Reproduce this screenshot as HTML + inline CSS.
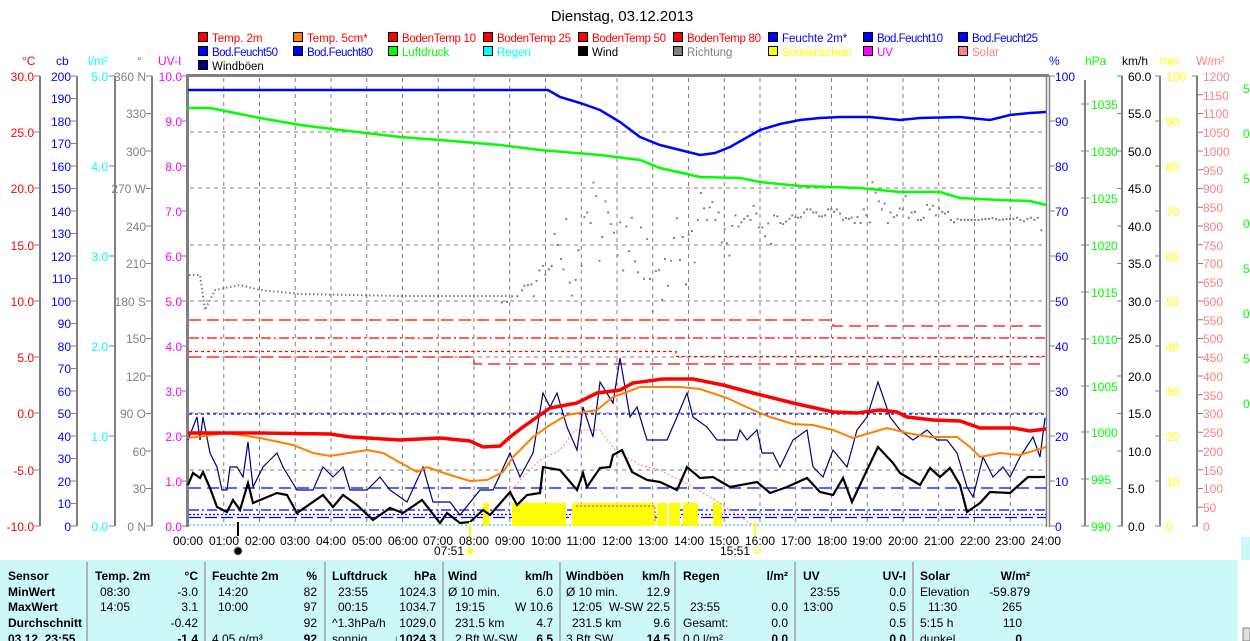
<!DOCTYPE html>
<html><head><meta charset="utf-8"><style>
html,body{margin:0;padding:0;background:#fff;}
svg{display:block;font-family:"Liberation Sans",Arial,sans-serif;}
</style></head><body>
<svg width="1250" height="641" viewBox="0 0 1250 641" xmlns="http://www.w3.org/2000/svg">
<rect width="1250" height="641" fill="#fff"/>
<text x="622" y="21" font-size="15" text-anchor="middle" fill="#000">Dienstag, 03.12.2013</text>

<!-- legend -->
<g font-size="12" stroke="#000" stroke-width="1">
<rect x="198.5" y="32.5" width="9" height="9" fill="#ff0000"/><rect x="293.5" y="32.5" width="9" height="9" fill="#ff8000"/><rect x="388.5" y="32.5" width="9" height="9" fill="#ff0000"/><rect x="483.5" y="32.5" width="9" height="9" fill="#ff0000"/><rect x="578.5" y="32.5" width="9" height="9" fill="#ff0000"/><rect x="673.5" y="32.5" width="9" height="9" fill="#ff0000"/><rect x="768.5" y="32.5" width="9" height="9" fill="#0000ff"/><rect x="863.5" y="32.5" width="9" height="9" fill="#0000ff"/><rect x="958.5" y="32.5" width="9" height="9" fill="#0000ff"/>
<rect x="198.5" y="46.5" width="9" height="9" fill="#0000ff"/><rect x="293.5" y="46.5" width="9" height="9" fill="#0000ff"/><rect x="388.5" y="46.5" width="9" height="9" fill="#00ff00"/><rect x="483.5" y="46.5" width="9" height="9" fill="#00ffff"/><rect x="578.5" y="46.5" width="9" height="9" fill="#000"/><rect x="673.5" y="46.5" width="9" height="9" fill="#808080"/><rect x="768.5" y="46.5" width="9" height="9" fill="#ffff00"/><rect x="863.5" y="46.5" width="9" height="9" fill="#ff00ff"/><rect x="958.5" y="46.5" width="9" height="9" fill="#ff8080"/>
<rect x="198.5" y="60.5" width="9" height="9" fill="#000080"/>
</g>
<g font-size="11.5">
<text x="212" y="42" fill="#ff0000">Temp. 2m</text><text x="307" y="42" fill="#ff0000">Temp. 5cm*</text><text x="402" y="42" fill="#ff0000" textLength="74">BodenTemp 10</text><text x="497" y="42" fill="#ff0000" textLength="74">BodenTemp 25</text><text x="592" y="42" fill="#ff0000" textLength="74">BodenTemp 50</text><text x="687" y="42" fill="#ff0000" textLength="74">BodenTemp 80</text><text x="782" y="42" fill="#0000ff">Feuchte 2m*</text><text x="877" y="42" fill="#0000ff" textLength="66">Bod.Feucht10</text><text x="972" y="42" fill="#0000ff" textLength="66">Bod.Feucht25</text>
<text x="212" y="56" fill="#0000ff" textLength="66">Bod.Feucht50</text><text x="307" y="56" fill="#0000ff" textLength="66">Bod.Feucht80</text><text x="402" y="56" fill="#00ff00">Luftdruck</text><text x="497" y="56" fill="#00ffff">Regen</text><text x="592" y="56" fill="#000">Wind</text><text x="687" y="56" fill="#808080">Richtung</text><text x="782" y="56" fill="#ffff00" textLength="70">Sonnenschein</text><text x="877" y="56" fill="#ff00ff">UV</text><text x="972" y="56" fill="#ff8080">Solar</text>
<text x="212" y="70" fill="#000">Windböen</text>
</g>

<!-- axis headers -->
<g font-size="12">
<text x="22" y="65" fill="#ff0000">°C</text><text x="56" y="65" fill="#0000ff">cb</text><text x="88" y="65" fill="#00ffff">l/m²</text><text x="137" y="65" fill="#808080">°</text><text x="158" y="65" fill="#ff00ff">UV-I</text>
<text x="1049" y="65" fill="#0000ff">%</text><text x="1085" y="65" fill="#00ff00">hPa</text><text x="1122" y="65" fill="#000">km/h</text><text x="1160" y="65" fill="#ffff00">min</text><text x="1196" y="65" fill="#ff8080">W/m²</text>
</g>

<!-- axis lines -->
<g stroke="#808080" stroke-width="2" fill="none">
<path d="M40 76V526M77 76V526M115 76V526M152 76V526M1085 80V526M1122 76V526M1160 76V526M1197 76V526"/>
</g>
<g stroke="#808080" stroke-width="1" fill="none">
<path d="M34 76h6M34 132h6M34 188h6M34 245h6M34 301h6M34 357h6M34 413h6M34 470h6M34 526h6"/>
<path d="M71 76h6M71 98.5h6M71 121h6M71 143.5h6M71 166h6M71 188.5h6M71 211h6M71 233.5h6M71 256h6M71 278.5h6M71 301h6M71 323.5h6M71 346h6M71 368.5h6M71 391h6M71 413.5h6M71 436h6M71 458.5h6M71 481h6M71 503.5h6M71 526h6"/>
<path d="M109 76h6M109 166h6M109 256h6M109 346h6M109 436h6M109 526h6"/>
<path d="M146 76h6M146 113.5h6M146 151h6M146 188.5h6M146 226h6M146 263.5h6M146 301h6M146 338.5h6M146 376h6M146 413.5h6M146 451h6M146 488.5h6M146 526h6"/>
<path d="M182 76h6M182 121h6M182 166h6M182 211h6M182 256h6M182 301h6M182 346h6M182 391h6M182 436h6M182 481h6M182 526h6"/>
<path d="M1049 76h6M1049 121h6M1049 166h6M1049 211h6M1049 256h6M1049 301h6M1049 346h6M1049 391h6M1049 436h6M1049 481h6M1049 526h6"/>
<path d="M1081 104h8M1081 151h8M1081 198h8M1081 245h8M1081 292h8M1081 339h8M1081 386h8M1081 432h8M1081 479h8M1081 526h8"/>
<path d="M1117 76h6M1117 113.5h6M1117 151h6M1117 188.5h6M1117 226h6M1117 263.5h6M1117 301h6M1117 338.5h6M1117 376h6M1117 413.5h6M1117 451h6M1117 488.5h6M1117 526h6"/>
<path d="M1155 76h6M1155 121h6M1155 166h6M1155 211h6M1155 256h6M1155 301h6M1155 346h6M1155 391h6M1155 436h6M1155 481h6M1155 526h6"/>
<path d="M1192 76h6M1197 94.75h6M1197 113.5h6M1197 132.25h6M1197 151h6M1197 169.75h6M1197 188.5h6M1197 207.25h6M1197 226h6M1197 244.75h6M1197 263.5h6M1197 282.25h6M1197 301h6M1197 319.75h6M1197 338.5h6M1197 357.25h6M1197 376h6M1197 394.75h6M1197 413.5h6M1197 432.25h6M1197 451h6M1197 469.75h6M1197 488.5h6M1197 507.25h6M1192 526h6"/>
</g>

<!-- left labels -->
<g font-size="12" text-anchor="end">
<g fill="#ff0000"><text x="34" y="81">30.0</text><text x="34" y="137">25.0</text><text x="34" y="193">20.0</text><text x="34" y="250">15.0</text><text x="34" y="306">10.0</text><text x="34" y="362">5.0</text><text x="34" y="418">0.0</text><text x="34" y="475">-5.0</text><text x="34" y="531">-10.0</text></g>
<g fill="#0000ff"><text x="71" y="81">200</text><text x="71" y="103">190</text><text x="71" y="126">180</text><text x="71" y="148">170</text><text x="71" y="171">160</text><text x="71" y="193">150</text><text x="71" y="216">140</text><text x="71" y="238">130</text><text x="71" y="261">120</text><text x="71" y="283">110</text><text x="71" y="306">100</text><text x="71" y="328">90</text><text x="71" y="351">80</text><text x="71" y="373">70</text><text x="71" y="396">60</text><text x="71" y="418">50</text><text x="71" y="441">40</text><text x="71" y="463">30</text><text x="71" y="486">20</text><text x="71" y="508">10</text><text x="71" y="531">0</text></g>
<g fill="#00ffff"><text x="108" y="81">5.0</text><text x="108" y="171">4.0</text><text x="108" y="261">3.0</text><text x="108" y="351">2.0</text><text x="108" y="441">1.0</text><text x="108" y="531">0.0</text></g>
<g fill="#808080"><text x="146" y="81">360 N</text><text x="146" y="118">330</text><text x="146" y="156">300</text><text x="146" y="193">270 W</text><text x="146" y="231">240</text><text x="146" y="268">210</text><text x="146" y="306">180 S</text><text x="146" y="343">150</text><text x="146" y="381">120</text><text x="146" y="418">90  O</text><text x="146" y="456">60</text><text x="146" y="493">30</text><text x="146" y="531">0    N</text></g>
<g fill="#ff00ff"><text x="182" y="81">10.0</text><text x="182" y="126">9.0</text><text x="182" y="171">8.0</text><text x="182" y="216">7.0</text><text x="182" y="261">6.0</text><text x="182" y="306">5.0</text><text x="182" y="351">4.0</text><text x="182" y="396">3.0</text><text x="182" y="441">2.0</text><text x="182" y="486">1.0</text><text x="182" y="531">0.0</text></g>
</g>
<!-- right labels -->
<g font-size="12">
<g fill="#0000ff"><text x="1055" y="81">100</text><text x="1055" y="126">90</text><text x="1055" y="171">80</text><text x="1055" y="216">70</text><text x="1055" y="261">60</text><text x="1055" y="306">50</text><text x="1055" y="351">40</text><text x="1055" y="396">30</text><text x="1055" y="441">20</text><text x="1055" y="486">10</text><text x="1055" y="531">0</text></g>
<g fill="#00ff00"><text x="1091" y="109">1035</text><text x="1091" y="156">1030</text><text x="1091" y="203">1025</text><text x="1091" y="250">1020</text><text x="1091" y="297">1015</text><text x="1091" y="344">1010</text><text x="1091" y="391">1005</text><text x="1091" y="437">1000</text><text x="1091" y="484">995</text><text x="1091" y="531">990</text></g>
<g fill="#000"><text x="1128" y="81">60.0</text><text x="1128" y="118">55.0</text><text x="1128" y="156">50.0</text><text x="1128" y="193">45.0</text><text x="1128" y="231">40.0</text><text x="1128" y="268">35.0</text><text x="1128" y="306">30.0</text><text x="1128" y="343">25.0</text><text x="1128" y="381">20.0</text><text x="1128" y="418">15.0</text><text x="1128" y="456">10.0</text><text x="1128" y="493">5.0</text><text x="1128" y="531">0.0</text></g>
<g fill="#ffff00"><text x="1166" y="81">100</text><text x="1166" y="126">90</text><text x="1166" y="171">80</text><text x="1166" y="216">70</text><text x="1166" y="261">60</text><text x="1166" y="306">50</text><text x="1166" y="351">40</text><text x="1166" y="396">30</text><text x="1166" y="441">20</text><text x="1166" y="486">10</text><text x="1166" y="531">0</text></g>
<g fill="#ff8080"><text x="1203" y="81">1200</text><text x="1203" y="100">1150</text><text x="1203" y="118">1100</text><text x="1203" y="137">1050</text><text x="1203" y="156">1000</text><text x="1203" y="175">950</text><text x="1203" y="193">900</text><text x="1203" y="212">850</text><text x="1203" y="231">800</text><text x="1203" y="250">750</text><text x="1203" y="268">700</text><text x="1203" y="287">650</text><text x="1203" y="306">600</text><text x="1203" y="325">550</text><text x="1203" y="343">500</text><text x="1203" y="362">450</text><text x="1203" y="381">400</text><text x="1203" y="400">350</text><text x="1203" y="418">300</text><text x="1203" y="437">250</text><text x="1203" y="456">200</text><text x="1203" y="475">150</text><text x="1203" y="493">100</text><text x="1203" y="512">50</text><text x="1203" y="531">0</text></g>
<g fill="#00ff00"><text x="1243" y="93">5</text><text x="1243" y="138">0</text><text x="1243" y="183">5</text><text x="1243" y="228">0</text><text x="1243" y="273">5</text><text x="1243" y="318">0</text><text x="1243" y="363">5</text><text x="1243" y="408">0</text></g>
</g>

<!-- grid -->
<g stroke="#808080" stroke-width="1" stroke-dasharray="4,4" fill="none">
<path d="M223.75 78V526M259.5 78V526M295.25 78V526M331 78V526M366.75 78V526M402.5 78V526M438.25 78V526M474 78V526M509.75 78V526M545.5 78V526M581.25 78V526M617 78V526M652.75 78V526M688.5 78V526M724.25 78V526M760 78V526M795.75 78V526M831.5 78V526M867.25 78V526M903 78V526M938.75 78V526M974.5 78V526M1010.25 78V526"/>
<path d="M190 132H1046M190 188H1046M190 245H1046M190 301H1046M190 357H1046M190 413H1046M190 470H1046"/>
</g>
<!-- plot frame -->
<path d="M187.5 76V527M186 75.5H1049" stroke="#808080" stroke-width="3" fill="none"/>
<path d="M1046.5 76V527M1049.5 76V527" stroke="#808080" stroke-width="1.5" fill="none"/>

<!-- soil temp lines -->
<g fill="none" stroke="#ff0000" stroke-width="1.3">
<path d="M189 320H833V326H1046" stroke-dasharray="12,6"/>
<path d="M189 338H1046" stroke-dasharray="10,3,2,3"/>
<path d="M189 351.5H676V356.5H1046" stroke-dasharray="3,3"/>
<path d="M189 357H474V364H1046" stroke-dasharray="12,6"/>
</g>
<!-- soil moisture lines -->
<g fill="none" stroke="#0000ff" stroke-width="1.3">
<path d="M189 414H1046" stroke-dasharray="3,3"/>
<path d="M189 488H1046" stroke-dasharray="12,6"/>
<path d="M189 510H1046" stroke-dasharray="10,3,2,3"/>
<path d="M189 514.5H1046" stroke-dasharray="2,2"/>
<path d="M189 517.5H1046" stroke-dasharray="12,4"/>
</g>
<path d="M189 525H1046" stroke="#00c0c0" stroke-width="1" stroke-dasharray="2,2"/>

<!-- sunshine -->
<g fill="#ffff00">
<rect x="483" y="503" width="6" height="23"/><rect x="512" y="503" width="54" height="23"/><rect x="572" y="503" width="83" height="23"/><rect x="657" y="503" width="10" height="23"/><rect x="669" y="503" width="11" height="23"/><rect x="683" y="503" width="15" height="23"/><rect x="713" y="503" width="9" height="23"/>
</g>
<path d="M576 506H655V522" stroke="#ff00ff" stroke-width="1" stroke-dasharray="2,2" fill="none"/>

<!-- solar pink dotted -->
<path d="M500 505L520 480L540 460L560 450L575 430L600 430L615 450L640 465L660 470L690 485L715 500L745 520L755 526" stroke="#ff8080" stroke-width="1" stroke-dasharray="2,2" fill="none"/>

<!-- Luftdruck -->
<polyline fill="none" stroke="#00ff00" stroke-width="2.5" points="188,108 210,108 230,112 260,118 300,125 340,130 400,137 440,140 500,145 540,150 600,155 640,160 660,168 700,177 740,178 760,182 800,186 860,188 900,192 940,192 960,198 1000,200 1030,201 1046,205"/>
<!-- Feuchte 2m -->
<polyline fill="none" stroke="#0000ff" stroke-width="2.5" points="188,90 548,90 560,97 580,103 600,110 620,122 640,137 660,145 680,150 700,155 715,153 730,147 760,130 780,124 800,120 820,118 840,117 870,117 900,120 920,118 960,117 990,120 1010,115 1030,113 1046,112"/>
<!-- Richtung early -->
<path d="M189 275H200L205 310L215 290L240 285L260 290L280 292L300 294L400 296L510 296" stroke="#808080" stroke-width="2" stroke-dasharray="1.5,2.5" fill="none"/>
<g transform="translate(500,170) scale(0.3488)" fill="none" stroke="#808080" stroke-width="5.7" stroke-linecap="square">
<path d="M5 380h0M20 378h0M35 362h0M50 362h0M63 345h0M70 332h0M80 330h0M90 328h0M97 362h0M105 318h0M113 288h0M123 275h0M130 300h0M140 285h0M148 275h0M157 183h0M165 215h0M175 255h0M182 285h0M190 140h0M200 323h0M207 360h0M217 315h0M225 230h0M234 275h0M242 135h0M250 122h0M260 152h0M268 36h0M276 75h0M285 260h0M293 192h0M302 90h0M310 122h0M318 155h0M327 180h0M337 245h0M345 150h0M353 288h0M362 162h0M370 233h0M378 137h0M387 262h0M396 293h0M404 165h0M413 312h0M422 198h0M430 312h0M438 405h0M447 290h0M456 287h0M465 372h0M473 255h0M482 332h0M490 260h0M499 195h0M507 138h0M516 258h0M524 192h0M533 328h0M541 185h0M550 175h0M558 265h0M567 143h0M576 66h0M585 110h0M593 143h0M601 107h0M609 92h0M618 143h0M627 122h0M636 208h0M644 170h0M650 210h0M658 245h0M666 160h0M675 130h0M684 162h0M692 150h0M700 140h0M710 132h0M718 143h0M727 103h0M735 125h0M743 165h0M752 165h0M760 190h0M769 153h0M777 212h0M786 130h0M795 133h0M804 152h0M812 155h0M820 148h0M830 140h0M838 130h0M847 135h0M855 137h0M863 135h0M872 122h0M880 113h0M890 113h0M898 122h0M907 122h0M915 133h0M923 133h0M932 130h0M941 113h0M950 113h0M958 120h0M966 113h0M975 125h0M983 143h0M992 138h0M1000 140h0M1008 137h0M1017 152h0M1025 135h0M1034 152h0M1043 113h0M1050 130h0M1060 150h0M1068 35h0M1077 65h0M1086 90h0M1095 113h0M1103 96h0M1112 152h0M1120 122h0M1129 135h0M1138 130h0M1146 110h0M1155 113h0M1163 75h0M1172 137h0M1180 122h0M1190 120h0M1198 143h0M1207 143h0M1215 137h0M1224 100h0M1232 113h0M1241 103h0M1250 130h0M1259 110h0M1268 120h0M1276 125h0M1285 120h0M1293 143h0M1302 150h0M1312 140h0M1322 143h0M1332 143h0M1342 143h0M1352 143h0M1362 143h0M1372 143h0M1382 142h0M1392 141h0M1402 140h0M1412 138h0M1422 141h0M1432 143h0M1442 142h0M1452 141h0M1462 141h0M1472 140h0M1482 137h0M1492 143h0M1502 147h0M1512 140h0M1522 137h0M1532 143h0M1542 137h0M1552 173h0"/>
</g>

<!-- Windböen -->
<polyline fill="none" stroke="#000080" stroke-width="1.2" points="188,440 197,417 200,440 203,417 210,453 217,467 222,490 227,490 230,467 237,467 243,477 248,442 253,487 263,467 277,453 283,467 297,490 313,490 323,467 333,477 343,467 350,490 367,490 380,477 390,490 407,502 423,467 433,502 450,502 460,515 480,490 493,490 510,453 520,477 533,453 543,393 550,407 557,393 567,427 577,450 583,407 593,437 600,382 613,403 620,358 630,417 637,407 647,440 657,440 667,440 677,417 687,393 693,417 707,427 717,440 737,440 740,430 747,440 757,430 762,453 773,453 780,467 793,440 807,430 813,467 823,477 833,450 847,467 857,430 867,417 878,382 890,417 900,430 913,440 927,430 937,440 947,440 957,453 967,487 973,497 983,457 993,477 1003,467 1010,477 1020,457 1033,437 1040,457 1045,418"/>
<!-- Temp 5cm -->
<polyline fill="none" stroke="#ff8000" stroke-width="2" points="188,438 227,433 260,438 293,445 313,453 330,456 367,450 383,453 417,472 427,467 450,475 470,481 487,480 503,472 513,457 533,437 550,425 567,415 597,410 613,397 627,392 640,387 680,387 700,389 727,398 753,410 770,417 793,424 813,425 833,430 853,438 870,433 887,428 907,433 930,437 957,437 970,447 980,457 1000,453 1020,455 1046,447"/>
<!-- Temp 2m -->
<polyline fill="none" stroke="#ff0000" stroke-width="3.5" points="188,433 260,433 330,434 350,437 400,440 440,438 470,441 483,447 500,446 510,437 523,427 550,408 577,403 597,393 620,390 633,383 663,379 693,379 723,385 753,393 793,403 833,412 857,413 880,410 897,412 907,417 933,420 960,421 980,428 1013,428 1030,431 1046,429"/>
<!-- Wind -->
<polyline fill="none" stroke="#000" stroke-width="2.2" points="188,485 193,473 200,478 203,472 210,488 217,507 227,512 233,500 240,510 248,483 253,503 277,493 287,495 297,513 323,495 333,507 343,495 357,505 373,520 390,508 403,513 422,500 440,523 447,513 460,523 470,522 483,510 490,515 510,492 517,505 527,495 540,493 543,467 560,470 577,490 583,473 587,487 600,468 610,467 613,455 622,450 632,472 647,480 660,482 677,490 687,467 700,478 713,477 730,487 757,482 770,493 787,487 807,478 820,492 833,495 843,478 852,502 867,470 878,447 893,463 900,473 920,485 930,468 940,477 950,468 960,485 967,512 980,503 990,492 1010,493 1028,477 1045,477"/>

<!-- time labels -->
<g font-size="12" text-anchor="middle" fill="#000">
<text x="188" y="545">00:00</text><text x="224" y="545">01:00</text><text x="260" y="545">02:00</text><text x="295" y="545">03:00</text><text x="331" y="545">04:00</text><text x="367" y="545">05:00</text><text x="403" y="545">06:00</text><text x="438" y="545">07:00</text><text x="474" y="545">08:00</text><text x="510" y="545">09:00</text><text x="546" y="545">10:00</text><text x="581" y="545">11:00</text><text x="617" y="545">12:00</text><text x="653" y="545">13:00</text><text x="689" y="545">14:00</text><text x="724" y="545">15:00</text><text x="760" y="545">16:00</text><text x="796" y="545">17:00</text><text x="832" y="545">18:00</text><text x="867" y="545">19:00</text><text x="903" y="545">20:00</text><text x="939" y="545">21:00</text><text x="975" y="545">22:00</text><text x="1010" y="545">23:00</text><text x="1046" y="545">24:00</text>
<text x="449" y="555">07:51</text><text x="735" y="555">15:51</text>
</g>
<path d="M238 522V536" stroke="#000" stroke-width="2"/>
<circle cx="238" cy="551" r="4" fill="#000" stroke="#999" stroke-width="1"/>
<path d="M470 522V536M755 522V536" stroke="#ffff00" stroke-width="2"/>
<circle cx="470" cy="551" r="3" fill="#ffff00"/>
<rect x="755" y="548" width="5" height="5" fill="none" stroke="#ffff00" stroke-width="1"/>

<!-- scrollbar bit -->
<rect x="1241" y="537" width="9" height="24" fill="#ccf8f8"/>

<!-- table -->
<rect x="0" y="560" width="1238" height="81" fill="#ccf8f8"/>
<rect x="1240" y="560" width="10" height="81" fill="#fff"/>
<rect x="1243" y="628" width="7" height="13" fill="#e0e0e0" stroke="#808080" stroke-width="1"/>
<g stroke="#a0a0a0" stroke-width="1.5">
<path d="M87 562V641M205 562V641M325 562V641M443 562V641M560 562V641M675 562V641M795 562V641M913 562V641"/>
</g>
<g font-size="12" fill="#000">
<g font-weight="bold"><text x="8" y="580">Sensor</text><text x="8" y="611">MaxWert</text><text x="8" y="596">MinWert</text><text x="8" y="627">Durchschnitt</text><text x="8" y="643">03.12. 23:55</text>
<text x="95" y="580">Temp. 2m</text><text x="212" y="580">Feuchte 2m</text><text x="332" y="580">Luftdruck</text><text x="448" y="580">Wind</text><text x="566" y="580">Windböen</text><text x="683" y="580">Regen</text><text x="803" y="580">UV</text><text x="920" y="580">Solar</text></g>
<g font-weight="bold" text-anchor="end"><text x="198" y="580">°C</text><text x="317" y="580">%</text><text x="436" y="580">hPa</text><text x="553" y="580">km/h</text><text x="670" y="580">km/h</text><text x="788" y="580">l/m²</text><text x="906" y="580">UV-I</text><text x="1030" y="580">W/m²</text>
<text x="198" y="643">-1.4</text><text x="317" y="643">92</text><text x="436" y="643">↓1024.3</text><text x="553" y="643">6.5</text><text x="670" y="643">14.5</text><text x="788" y="643">0.0</text><text x="906" y="643">0.0</text><text x="1022" y="643">0</text></g>
<text x="100" y="596">08:30</text><text x="100" y="611">14:05</text>
<text x="218" y="596">14:20</text><text x="218" y="611">10:00</text><text x="212" y="643">4.05 g/m³</text>
<text x="338" y="596">23:55</text><text x="338" y="611">00:15</text><text x="332" y="627">^1.3hPa/h</text><text x="332" y="643">sonnig</text>
<text x="448" y="596">Ø 10 min.</text><text x="455" y="611">19:15</text><text x="455" y="627">231.5 km</text><text x="455" y="643">2 Bft W-SW</text>
<text x="566" y="596">Ø 10 min.</text><text x="572" y="611">12:05</text><text x="572" y="627">231.5 km</text><text x="566" y="643">3 Bft SW</text>
<text x="690" y="611">23:55</text><text x="683" y="627">Gesamt:</text><text x="683" y="643">0.0 l/m²</text>
<text x="810" y="596">23:55</text><text x="803" y="611">13:00</text>
<text x="920" y="596">Elevation</text><text x="928" y="611">11:30</text><text x="920" y="627">5:15 h</text><text x="920" y="643">dunkel</text>
<g text-anchor="end">
<text x="198" y="596">-3.0</text><text x="198" y="611">3.1</text><text x="198" y="627">-0.42</text>
<text x="317" y="596">82</text><text x="317" y="611">97</text><text x="317" y="627">92</text>
<text x="436" y="596">1024.3</text><text x="436" y="611">1034.7</text><text x="436" y="627">1029.0</text>
<text x="553" y="596">6.0</text><text x="553" y="611">W 10.6</text><text x="553" y="627">4.7</text>
<text x="670" y="596">12.9</text><text x="670" y="611">W-SW 22.5</text><text x="670" y="627">9.6</text>
<text x="788" y="611">0.0</text><text x="788" y="627">0.0</text>
<text x="906" y="596">0.0</text><text x="906" y="611">0.5</text><text x="906" y="627">0.5</text>
<text x="1030" y="596">-59.879</text><text x="1022" y="611">265</text><text x="1022" y="627">110</text>
</g>
</g>
</svg>
</body></html>
